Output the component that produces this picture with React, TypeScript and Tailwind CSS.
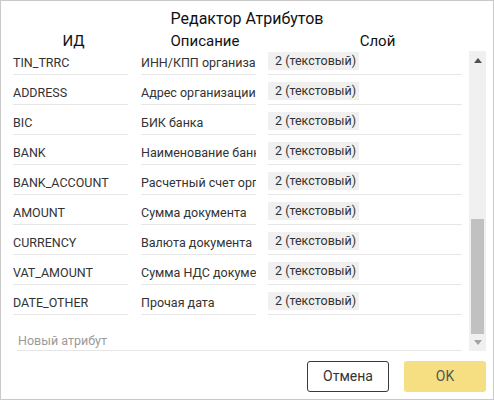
import React from "react";

const rows: [string, string][] = [
  ["TIN_TRRC", "ИНН/КПП организации"],
  ["ADDRESS", "Адрес организации"],
  ["BIC", "БИК банка"],
  ["BANK", "Наименование банка"],
  ["BANK_ACCOUNT", "Расчетный счет организации"],
  ["AMOUNT", "Сумма документа"],
  ["CURRENCY", "Валюта документа"],
  ["VAT_AMOUNT", "Сумма НДС документа"],
  ["DATE_OTHER", "Прочая дата"],
];

export default function App() {
  return (
    <div
      className="w-[494px] h-[400px] bg-white border border-[#c9c9c9] flex flex-col text-[#222]"
      style={{ fontFamily: "Roboto, 'Noto Sans', sans-serif" }}
    >
      <div className="mt-[8px] h-[20px] leading-[20px] text-center text-[16px] font-normal text-[#111]">
        Редактор Атрибутов
      </div>
      <div className="mt-[2px] grid grid-cols-[145px_118px_1fr] h-[20px] leading-[20px] text-[15px] font-normal text-[#111]">
        <div className="text-center">ИД</div>
        <div className="text-center">Описание</div>
        <div className="text-center pr-[2px]">Слой</div>
      </div>
      <div className="flex h-[300px] pl-[12px] pr-[7px]">
        <div className="flex-1 overflow-hidden">
          <div className="-mt-[6px] flex flex-col">
            {rows.map(([id, desc]) => (
              <div key={id} className="flex h-[30px] text-[12.5px] text-[#333]">
                <div className="w-[115px] border-b border-[#e6e6e6] flex items-center pt-[8px] whitespace-nowrap">
                  {id}
                </div>
                <div className="ml-[13px] w-[115px] border-b border-[#e6e6e6] flex items-center pt-[8px] overflow-hidden whitespace-nowrap">
                  {desc}
                </div>
                <div className="ml-[12px] w-[194px] border-b border-[#e6e6e6] flex items-center pt-[3px]">
                  <div className="h-[18px] w-[91px] bg-[#f0f0f0] pl-[7px] flex items-center whitespace-nowrap text-[#333]">
                    2 (текстовый)
                  </div>
                </div>
              </div>
            ))}
            <div className="mt-[14px] ml-[4px] w-[445px] h-[22px] border-b border-[#e6e6e6] flex items-center pt-[3px] pl-[1px] text-[12.5px] text-[#9a9a9a]">
              Новый атрибут
            </div>
          </div>
        </div>
        <div className="ml-[6px] w-[17px] bg-[#f0f0f0] flex flex-col">
          <div className="h-[18px] flex items-center justify-center">
            <svg width="8" height="5" viewBox="0 0 8 5">
              <path d="M0 5 L4 0 L8 5 Z" fill="#505050" />
            </svg>
          </div>
          <div className="flex-1" />
          <div className="h-[115px] mx-[2px] bg-[#c1c1c1]" />
          <div className="h-[17px] flex items-center justify-center">
            <svg width="8" height="5" viewBox="0 0 8 5">
              <path d="M0 0 L8 0 L4 5 Z" fill="#a3a3a3" />
            </svg>
          </div>
        </div>
      </div>
      <div className="mt-[10px] flex justify-end gap-[15px] pr-[7px]">
        <button className="w-[82px] h-[31px] border border-[#3a3a3a] rounded-[3px] bg-white text-[14px] text-[#333]">
          Отмена
        </button>
        <button className="w-[82px] h-[31px] rounded-[3px] bg-[#f6df82] text-[14px] text-[#555]">
          OK
        </button>
      </div>
    </div>
  );
}
